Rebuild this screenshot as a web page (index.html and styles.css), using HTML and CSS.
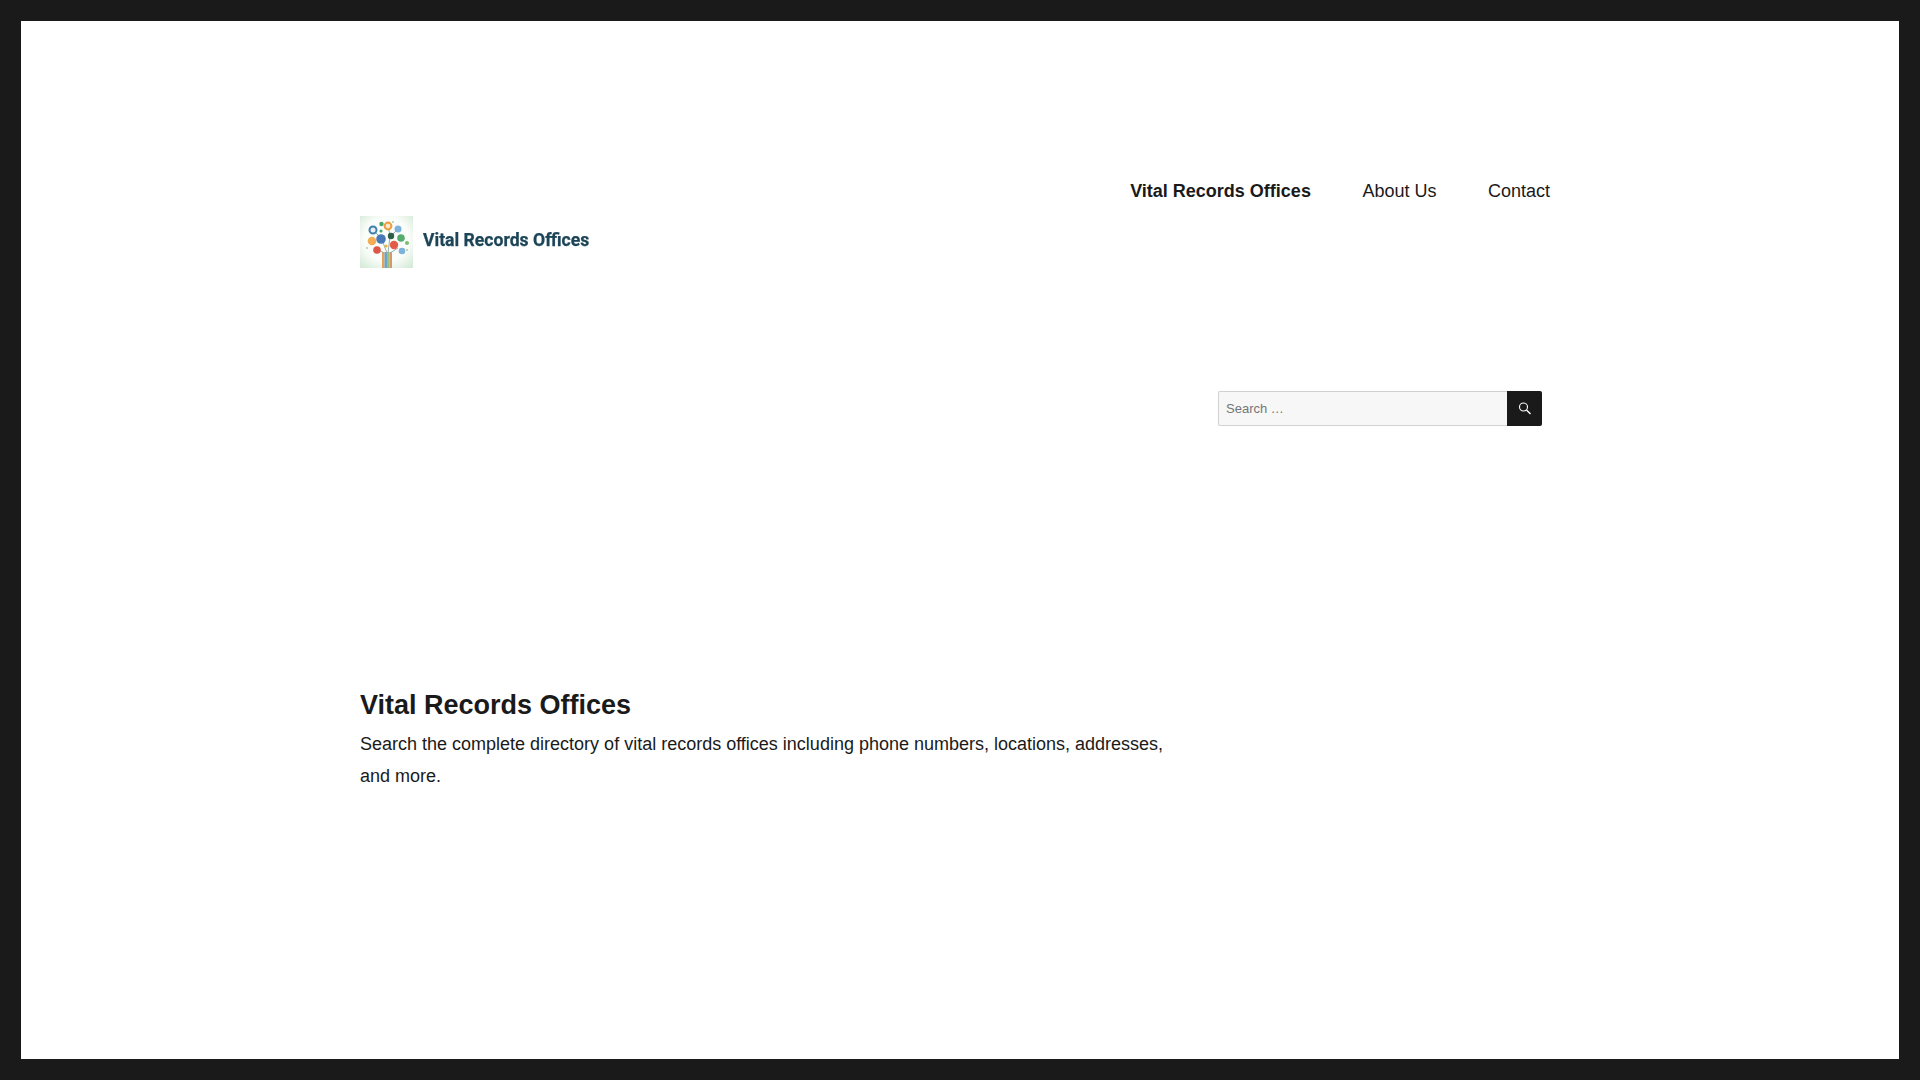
FILE: index.html
```html
<!DOCTYPE html>
<html lang="en">

<head>
    <meta charset="UTF-8" />
    <meta name="viewport" content="width=device-width, initial-scale=1.0" />
    <title>Vital Records Offices</title>
    <link rel="stylesheet" href="styles.css">
</head>

<body>
    <div class="site">
        <header class="site-header">
            <nav class="main-nav">
                <a class="current" href="#">Vital Records Offices</a>
                <a href="#">About Us</a>
                <a href="#">Contact</a>
            </nav>
            <a class="logo" href="#">
                <svg class="logo-tree" viewBox="0 0 53 52" width="53" height="52">
                    <defs>
                        <radialGradient id="logoBg" cx="50%" cy="45%" r="70%">
                            <stop offset="60%" stop-color="#fbfdfa" />
                            <stop offset="100%" stop-color="#d5ebd8" />
                        </radialGradient>
                        <filter id="soft">
                            <feGaussianBlur stdDeviation="0.6" />
                        </filter>
                    </defs>
                    <rect width="53" height="52" fill="url(#logoBg)" />
                    <g filter="url(#soft)">
                        <rect x="22" y="36" width="2.500" height="16" fill="#e8a15a" />
                        <rect x="24.500" y="36" width="2.500" height="16" fill="#6aa5cf" />
                        <rect x="27" y="36" width="2.500" height="16" fill="#9cc27a" />
                        <rect x="29.500" y="36" width="2.500" height="16" fill="#d9966a" />
                        <path d="M24 37L17 33M27 37L22 24M28 37L30 20M30 37L38 32M21 22L13 14M30 19L28 10M31 20L38 13" stroke="#9ab0a8" stroke-width="1" fill="none" />
                        <circle cx="13" cy="14" r="3.500" fill="#e6f1f6" stroke="#3d80ad" stroke-width="2" />
                        <circle cx="21.500" cy="8" r="2.200" fill="#4aa56c" />
                        <circle cx="21" cy="15" r="1.600" fill="#4aa56c" />
                        <circle cx="28" cy="10" r="3.400" fill="#fbe8cc" stroke="#ee9c3f" stroke-width="2" />
                        <circle cx="38" cy="13" r="3.500" fill="#7db2da" />
                        <circle cx="21" cy="23" r="4.800" fill="#4a78b8" />
                        <circle cx="31" cy="20" r="3.200" fill="#2f5f48" />
                        <circle cx="12" cy="25" r="4.300" fill="#f2ad55" />
                        <circle cx="41" cy="22" r="3.800" fill="#55ad70" />
                        <circle cx="34" cy="29" r="4.200" fill="#e25c48" />
                        <circle cx="47" cy="27" r="2" fill="#7abf6a" />
                        <circle cx="17" cy="34" r="3.800" fill="#de5646" />
                        <circle cx="42" cy="35" r="3.300" fill="#7db2da" />
                        <circle cx="26" cy="30" r="1.600" fill="#edb23f" />
                        <circle cx="7" cy="32" r="1" fill="#a6cfaa" />
                        <circle cx="47" cy="34" r="1" fill="#a6cfaa" />
                        <circle cx="33" cy="6" r="1" fill="#a6cfaa" />
                    </g>
                </svg>
                <span class="logo-text">Vital Records Offices</span>
            </a>
        </header>

        <div class="content-row">
            <main class="content">
                <h1>Vital Records Offices</h1>
                <p>Search the complete directory of vital records offices including phone numbers, locations, addresses, and more.</p>
            </main>
            <aside class="sidebar">
                <form class="search-form" onsubmit="return false">
                    <input type="search" placeholder="Search …" />
                    <button type="submit" aria-label="Search">
                        <svg viewBox="0 0 16 16" width="16" height="16" fill="none" stroke="#fff">
                            <circle cx="6.500" cy="6" r="4" stroke-width="1.100" />
                            <path d="M9.500 9L13.500 13" stroke-width="1.500" />
                        </svg>
                    </button>
                </form>
            </aside>
        </div>
    </div>
</body>

</html>
```

FILE: styles.css
```css
* {
    box-sizing: border-box;
}

html,
body {
    margin: 0;
    height: 100%;
}

body {
    font-family: "Liberation Sans", Arial, sans-serif;
    color: #1a1a1a;
    background: #fff;
}

.site {
    height: 1080px;
    border: 21px solid #1a1a1a;
    padding: 0 339px;
    background: #fff;
}

.site-header {
    padding-top: 156px;
}

.main-nav {
    display: flex;
    justify-content: flex-end;
    gap: 51.500px;
    font-size: 18px;
    line-height: 28px;
    margin-right: 10px;
}

.main-nav a {
    color: #1a1a1a;
    text-decoration: none;
}

.main-nav a.current {
    font-weight: bold;
}

.logo {
    display: flex;
    align-items: center;
    gap: 10px;
    margin-top: 11px;
    text-decoration: none;
}

.logo-tree {
    display: block;
}

.logo-text {
    font-family: Roboto, sans-serif;
    font-weight: 700;
    font-size: 17.600px;
    color: #1d4558;
    -webkit-text-stroke: 0.25px #1d4558;
    filter: blur(0.35px);
    position: relative;
    top: -2px;
}

.content-row {
    display: flex;
    justify-content: space-between;
}

.content {
    width: 810px;
    padding-top: 418px;
}

.content h1 {
    margin: 0;
    font-size: 27px;
    line-height: 38px;
    font-weight: bold;
}

.content p {
    margin: 4px 0 0;
    font-size: 18px;
    line-height: 32px;
}

.sidebar {
    width: 324px;
    margin-right: 18px;
    padding-top: 123px;
}

.search-form {
    display: flex;
    height: 35px;
}

.search-form input {
    flex: 1;
    min-width: 0;
    height: 35px;
    padding: 0 7px;
    border: 1px solid #d1d1d1;
    border-right: 0;
    border-radius: 2px 0 0 2px;
    background: #f7f7f7;
    font-family: inherit;
    font-size: 13px;
    color: #757575;
    outline: none;
}

.search-form input::placeholder {
    color: #757575;
}

.search-form button {
    width: 35px;
    height: 35px;
    padding: 0;
    display: flex;
    align-items: center;
    justify-content: center;
    border: 0;
    border-radius: 0 2px 2px 0;
    background: #1a1a1a;
}
```
